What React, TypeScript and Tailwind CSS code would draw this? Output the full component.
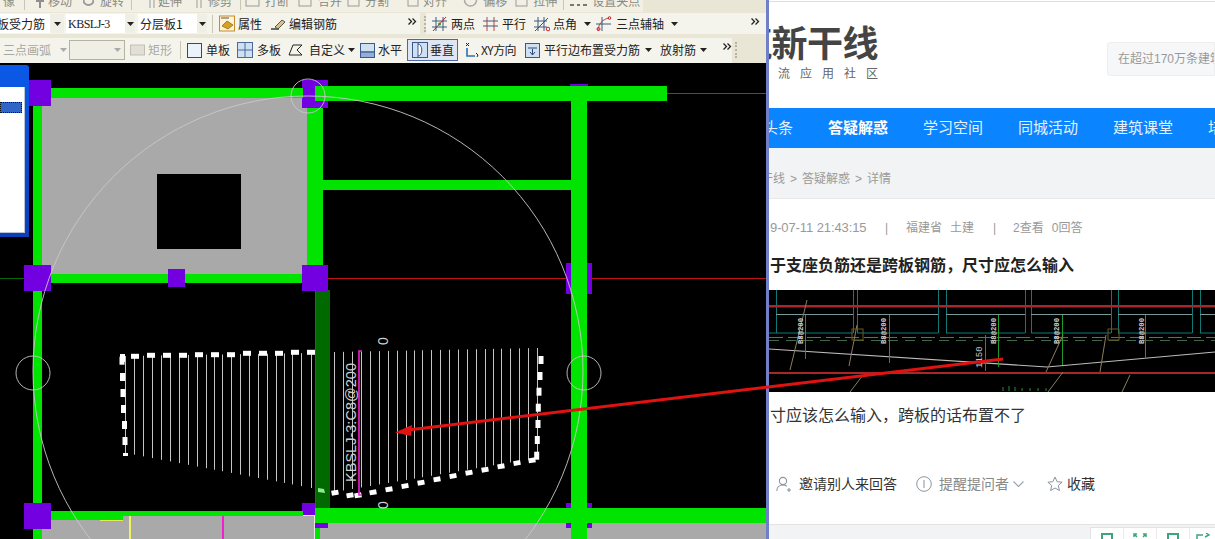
import React from "react";

const T = ({ c, className = "" }: { c: string; className?: string }) => (
  <span className={`shrink-0 whitespace-nowrap ${className}`}>{c}</span>
);

const Caret = ({ className = "" }: { className?: string }) => (
  <svg width="7" height="4" viewBox="0 0 7 4" className={`shrink-0 ${className}`}>
    <path d="M0 0h7L3.5 4z" fill="currentColor" />
  </svg>
);

const Chev = ({ className = "" }: { className?: string }) => (
  <svg width="9" height="7" viewBox="0 0 9 7" className={`shrink-0 self-start mt-[5px] ${className}`} fill="none" stroke="#222" strokeWidth="1.3">
    <path d="M0.5 0.5l3 3-3 3M4.5 0.5l3 3-3 3" />
  </svg>
);

const Sep = ({ className = "" }: { className?: string }) => (
  <span className={`shrink-0 w-px h-[18px] bg-[#c9c6b6] ${className}`} />
);

const Grip = ({ className = "" }: { className?: string }) => (
  <span className={`shrink-0 w-[2px] h-[16px] border-l-2 border-dotted border-[#b5b3a6] ${className}`} />
);

const Ic = ({ w, h = 14, className = "", children }: { w: number; h?: number; className?: string; children: React.ReactNode }) => (
  <svg width={w} height={h} viewBox={`0 0 ${w} ${h}`} fill="none" className={`shrink-0 ${className}`}>
    {children}
  </svg>
);

const Select = ({ text, latin, boxW, btnClass }: { text: string; latin?: boolean; boxW: string; btnClass?: string }) => (
  <div className="flex h-[19px] shrink-0">
    <div className={`bg-white flex items-center overflow-hidden ${boxW} ${latin ? "font-['Liberation_Serif',serif] text-[12px] tracking-[-0.5px] pl-[2px]" : "pl-[2px]"}`}>
      {text}
    </div>
    <div className={`w-[10px] bg-[#f0efe6] flex items-center justify-center ${btnClass ?? ""}`}>
      <Caret className="text-[#222]" />
    </div>
  </div>
);

const H = (x: number) => 352 - ((x - 334) * 4) / 203;
const leftXs = [125, 134, 143, 152, 161, 170, 179, 188, 197, 206, 214, 222, 231, 240, 249, 258, 267, 276, 284, 292, 301, 311];
const rightXs = [334, 343, 352, 361, 370, 379, 388, 397, 406, 414, 422, 431, 440, 449, 458, 467, 476, 485, 493, 501, 510, 519, 528, 537];
const topDash: [number, number][] = [[135, 356.3], [151, 355.3], [167, 355.3], [183, 355.3], [199, 354.7], [215, 354.7], [231, 354.7], [247, 353.3], [263, 353.3], [279, 353.3], [295, 352.3], [311, 352.3]];
const leftDash: [number, number][] = [[122, 360.7], [122.5, 377], [123, 393], [123.5, 409], [124.5, 425], [125, 441]];
const botDash: [number, number][] = [[335, 492.7], [350, 495.3], [358, 495.3], [373, 492.3], [389, 489.3], [405, 486], [421, 482.7], [437, 479.3], [453, 476], [469, 472.7], [485, 469.7], [501, 466.3], [517, 463], [532, 460.3]];
const rightDash: [number, number][] = [[536.7, 455.7], [537.3, 440], [538, 424], [538.3, 407.7], [539, 391.7], [540, 376], [541, 360]];

const Cad = () => (
  <svg viewBox="0 63 766 476" width="766" height="476" className="block">
    <rect x="0" y="63" width="766" height="476" fill="#000" />
    <line x1="667" y1="93.5" x2="766" y2="93.5" stroke="#d01515" />
    <line x1="0" y1="278.5" x2="24" y2="278.5" stroke="#0a6a0a" />
    <line x1="328" y1="278.5" x2="766" y2="278.5" stroke="#c01212" />
    {/* slab */}
    <rect x="42" y="97" width="266" height="178" fill="#a9a9a9" />
    <rect x="157" y="174" width="84" height="75" fill="#000" />
    <rect x="42" y="516" width="273" height="23" fill="#a9a9a9" />
    <rect x="320" y="523" width="446" height="16" fill="#a9a9a9" />
    <rect x="129" y="516" width="2" height="23" fill="#f0f060" />
    <rect x="222" y="516" width="2" height="23" fill="#f020d0" />
    <rect x="100" y="520" width="23" height="1" fill="#e8e860" />
    <line x1="123" y1="515.5" x2="315" y2="515.5" stroke="#e8e8e8" />
    <line x1="314.5" y1="516" x2="314.5" y2="539" stroke="#e8e8e8" />
    {/* purple under */}
    <rect x="302" y="80" width="26" height="28" fill="#7200e0" />
    <rect x="566" y="263" width="26" height="31" fill="#7200e0" />
    <rect x="570" y="84" width="18" height="6" fill="#7200e0" />
    <rect x="566" y="503" width="26" height="25" fill="#7200e0" />
    <rect x="315" y="503" width="13" height="25" fill="#7200e0" />
    <rect x="302" y="503" width="13" height="12" fill="#7200e0" />
    {/* beams */}
    <rect x="315" y="290" width="15" height="218" fill="#006a00" />
    <line x1="315.5" y1="290" x2="315.5" y2="508" stroke="#a03010" />
    <g fill="#00e400">
      <rect x="51" y="88" width="252" height="10" />
      <rect x="315" y="86" width="352" height="15" />
      <rect x="307" y="108" width="16" height="160" />
      <rect x="33" y="106" width="9" height="408" />
      <rect x="51" y="274" width="252" height="9" />
      <rect x="323" y="180" width="248" height="10" />
      <rect x="571" y="91" width="16" height="448" />
      <rect x="51" y="511" width="252" height="5" />
      <rect x="33" y="511" width="90" height="9" />
      <rect x="33" y="520" width="9" height="19" />
      <rect x="315" y="508" width="451" height="15" />
      <rect x="315" y="528" width="5" height="11" />
    </g>
    <rect x="29" y="80" width="22" height="26" fill="#7200e0" />
    <rect x="24" y="265" width="27" height="26" fill="#7200e0" />
    <rect x="302" y="265" width="26" height="26" fill="#7200e0" />
    <rect x="168" y="269" width="17" height="18" fill="#7200e0" />
    <rect x="24" y="503" width="27" height="26" fill="#7200e0" />
    {/* circles */}
    <g fill="none" stroke="#c8c8c8" strokeWidth="0.9">
      <circle cx="308" cy="371" r="275" />
      <circle cx="308" cy="96" r="17" />
      <circle cx="33" cy="373" r="17" />
      <circle cx="584" cy="373" r="17" />
    </g>
    {/* hatch */}
    <g stroke="#c4c4c4" strokeWidth="1">
      {leftXs.map((x) => (
        <line key={x} x1={x + 0.5} y1={356 - ((x - 125) * 3) / 186} x2={x + 0.5} y2={453 + ((x - 125) * 35) / 186} />
      ))}
      {rightXs.map((x) => (
        <line key={x} x1={x + 0.5} y1={H(x)} x2={x + 0.5} y2={492 - ((x - 334) * 34) / 203} />
      ))}
    </g>
    <g fill="#fff">
      {topDash.map(([x, y]) => (
        <rect key={x} x={x - 4} y={y - 2.5} width="8" height="5" />
      ))}
      {leftDash.map(([x, y]) => (
        <rect key={y} x={x - 2.5} y={y - 4} width="5" height="8" />
      ))}
      <rect x="123" y="453" width="5" height="3" />
      <rect x="120" y="354" width="5" height="8" />
      {botDash.map(([x, y]) => (
        <rect key={x} x={x - 3.5} y={y - 2.5} width="7" height="5" transform={`rotate(-10 ${x} ${y})`} />
      ))}
      {rightDash.map(([x, y]) => (
        <rect key={y} x={x - 2.5} y={y - 4} width="5" height="8" />
      ))}
    </g>
    <path d="M318 488l6 1 1 4-7-1z" fill="#90e890" />
    <path d="M362 351h-3v144h3" fill="none" stroke="#f020d0" strokeWidth="1.6" />
    <text x="0" y="0" transform="translate(356 482) rotate(-90)" fill="#cfcfcf" fontFamily="'Liberation Sans',sans-serif" fontSize="14" textLength="119" lengthAdjust="spacingAndGlyphs">KBSLJ-3:C8@200</text>
    <text x="0" y="0" transform="translate(388 345) rotate(-90)" fill="#cfcfcf" fontFamily="'Liberation Sans',sans-serif" fontSize="14">0</text>
    <text x="0" y="0" transform="translate(388 509) rotate(-90)" fill="#cfcfcf" fontFamily="'Liberation Sans',sans-serif" fontSize="14">0</text>
  </svg>
);

const Photo = () => (
  <svg viewBox="769 290 446 102" width="446" height="102" className="block shrink-0">
    <rect x="769" y="290" width="446" height="102" fill="#000" />
    <g stroke="#0f7a78" strokeWidth="1" fill="none">
      {[776, 853, 938, 1025, 1111, 1192].map((x) => (
        <path key={x} d={`M${x}.5 290v43`} />
      ))}
      {[857, 946, 1031, 1118, 1200].map((x) => (
        <path key={x} d={`M${x}.5 290v43`} />
      ))}
      <path d="M769 333H853M857 333H938M946 333H1025M1031 333H1111M1118 333H1192M1200 333H1215" />
    </g>
    <path d="M776 314.5H853M857 314.5H938M946 314.5H1025M1031 314.5H1111M1118 314.5H1192M1200 314.5H1215" stroke="#7a9a9a" fill="none" />
    <path d="M769 337.5H1215" stroke="#4f7a5a" strokeDasharray="14 5" fill="none" />
    <path d="M769 340.5H1215" stroke="#3f6a4a" strokeDasharray="10 7" fill="none" />
    <rect x="769" y="305" width="446" height="2.5" fill="#a8262c" />
    <rect x="769" y="372" width="446" height="2" fill="#a8262c" />
    <path d="M769 349L1047 367L1215 352" stroke="#bcbcbc" strokeWidth="1.1" fill="none" />
    <g stroke="#1f9a2a" fill="none">
      <path d="M805.5 315v44M889.5 315v48M998.5 315v52M1062.5 315v50M1145.5 315v44M985.5 335v36" />
    </g>
    <g stroke="#8a7f60" fill="none">
      <path d="M807 300L790 370M857 325L849 366M1063 335L1046 372M1063 372L1048 392M863 375L850 392M1106 335L1100 372M1130 375L1122 392" />
    </g>
    <g fill="none" stroke="#6a5a1a">
      <rect x="852" y="329" width="11" height="11" />
      <rect x="1108" y="329" width="11" height="11" />
    </g>
    <g fill="#d0d0d0" fontFamily="'Liberation Mono',monospace" fontSize="7" fontWeight="bold">
      {[803, 886, 996, 1059, 1144].map((x) => (
        <text key={x} x="0" y="0" transform={`translate(${x} 344) rotate(-90)`} textLength="26" lengthAdjust="spacingAndGlyphs">B8@200</text>
      ))}
    </g>
    <text x="0" y="0" transform="translate(982 368) rotate(-90)" fill="#c8c8c8" fontFamily="'Liberation Mono',monospace" fontSize="9">1150</text>
    <g stroke="#2a8a3a">
      <path d="M1003 391v-4M1009 391v-5M1015 391v-4M1022 391v-3M1030 391v-3M1038 391v-3M1046 391v-3" />
    </g>
  </svg>
);

export default function App() {
  return (
    <div className="relative flex w-[1215px] h-[539px] overflow-hidden bg-white font-['Liberation_Sans','Noto_Sans_CJK_SC',sans-serif]">
      {/* Left: CAD application */}
      <div className="relative w-[766px] h-[539px] shrink-0 overflow-hidden flex flex-col bg-[#e9e6d6] text-[12px] text-[#222] font-['Noto_Sans_CJK_SC',sans-serif]">
        {/* row 1, cut off at top */}
        <div className="h-[12px] shrink-0 overflow-hidden">
          <div className="w-[643px] h-[12px] bg-[#f2f0e4] flex items-start text-[#8a8a80] leading-[16px]">
            <div className="flex items-center h-[16px] -mt-[7px]">
              <T c="像" className="ml-[3px] w-[12px]" />
              <Sep className="ml-[9px]" />
              <Ic w={10} className="ml-[10px]"><path d="M5 0v14M1 7h8" stroke="#8f8f8f" strokeWidth="2" /></Ic>
              <T c="移动" className="ml-[3px]" />
              <Ic w={11} className="ml-[11px]"><circle cx="5.5" cy="6" r="5" stroke="#9a9a9a" strokeWidth="2" /></Ic>
              <T c="旋转" className="ml-[6px]" />
              <Sep className="ml-[7px]" />
              <Ic w={8} className="ml-[16px]"><path d="M2 0v14M6 0v14" stroke="#999" /></Ic>
              <T c="延伸" className="ml-[2px]" />
              <Ic w={8} className="ml-[13px]"><path d="M2 0v14M6 0v14" stroke="#999" /></Ic>
              <T c="修剪" className="ml-[5px]" />
              <Sep className="ml-[8px]" />
              <Ic w={15} className="ml-[4px]"><rect x="1" y="1" width="13" height="11" stroke="#999" /></Ic>
              <T c="打断" className="ml-[5px]" />
              <Ic w={14} className="ml-[9px]"><rect x="1" y="1" width="12" height="11" stroke="#999" /></Ic>
              <T c="合并" className="ml-[6px]" />
              <Ic w={13} className="ml-[5px]"><rect x="1" y="1" width="11" height="11" stroke="#999" /></Ic>
              <T c="分割" className="ml-[5px]" />
              <Ic w={12} className="ml-[18px]"><rect x="1" y="1" width="10" height="11" stroke="#999" /></Ic>
              <T c="对齐" className="ml-[4px]" />
              <Ic w={15} className="ml-[16px]"><circle cx="7.5" cy="6" r="6" stroke="#aaa" strokeWidth="1.5" /></Ic>
              <T c="偏移" className="ml-[5px]" />
              <Ic w={13} className="ml-[8px]"><rect x="1" y="1" width="11" height="11" stroke="#999" /></Ic>
              <T c="拉伸" className="ml-[5px]" />
              <Sep className="ml-[6px]" />
              <Ic w={17} className="ml-[6px]"><path d="M0 11h4M7 11h3M13 11h4" stroke="#777" strokeWidth="2" /></Ic>
              <T c="设置夹点" className="ml-[5px]" />
            </div>
          </div>
        </div>
        {/* row 2 */}
        <div className="h-[25px] shrink-0 flex items-start pt-[1px]">
          <div className="w-[420px] h-[21px] shrink-0 bg-[#f5f4ec] flex items-center overflow-hidden">
            <div className="-ml-[5px] flex">
              <Select text="板受力筋" boxW="w-[55px]" btnClass="w-[14px]" />
              <div className="w-[2px]" />
              <Select text="KBSLJ-3" latin boxW="w-[59px]" />
              <div className="w-[3px]" />
              <Select text="分层板1" boxW="w-[59px]" />
            </div>
            <Sep className="ml-[5px]" />
            <Ic w={16} h={17} className="ml-[6px]">
              <rect x="0.5" y="1" width="15" height="15" fill="#fff3d8" stroke="#c78a2c" />
              <path d="M3 11l5-5 6 4-5 4z" fill="#d8a020" stroke="#80601a" strokeWidth="0.7" />
              <path d="M2 3h8" stroke="#555" />
            </Ic>
            <T c="属性" className="ml-[3px]" />
            <Ic w={16} className="ml-[8px]">
              <path d="M1 12h8" stroke="#222" strokeWidth="1.3" />
              <path d="M5 10l7-7 3 2-7 7z" fill="#d8c28a" stroke="#333" strokeWidth="0.8" />
            </Ic>
            <T c="编辑钢筋" className="ml-[3px]" />
            <Chev className="ml-[71px]" />
          </div>
          <Grip className="ml-[4px] mt-[3px]" />
          <div className="flex-1 h-[21px] bg-[#f5f4ec] flex items-center overflow-hidden">
            <Ic w={15} h={16} className="ml-[6px]">
              <path d="M4 1v14M11 1v14" stroke="#3a5a80" />
              <path d="M0 5h15M0 11h15" stroke="#3a5a80" />
              <path d="M1 15L14 1" stroke="#c02020" />
              <circle cx="7.5" cy="8" r="1.5" fill="#40902a" />
            </Ic>
            <T c="两点" className="ml-[4px]" />
            <Ic w={15} h={16} className="ml-[8px]">
              <path d="M4 1v14M11 1v14" stroke="#c04040" />
              <path d="M0 5h15M0 10h15" stroke="#3a5a80" />
            </Ic>
            <T c="平行" className="ml-[4px]" />
            <Ic w={16} h={16} className="ml-[8px]">
              <path d="M4 1v14M10 1v14" stroke="#3a5a80" />
              <path d="M0 5h13M0 11h13" stroke="#3a5a80" />
              <path d="M1 15L14 2" stroke="#c02020" />
              <circle cx="14" cy="13" r="1.8" stroke="#d02020" />
            </Ic>
            <T c="点角" className="ml-[3px]" />
            <Caret className="ml-[7px] text-[#222]" />
            <Ic w={16} h={16} className="ml-[5px]">
              <path d="M2 15C2 8 7 3 13 2" stroke="#c04040" />
              <path d="M6 1v14M0 8h15" stroke="#3a5a80" />
              <circle cx="2.5" cy="13" r="1.5" stroke="#c02020" />
              <circle cx="13.5" cy="2" r="1.3" stroke="#c02020" />
            </Ic>
            <T c="三点辅轴" className="ml-[4px]" />
            <Caret className="ml-[7px] text-[#222]" />
            <Chev className="ml-[73px]" />
          </div>
        </div>
        {/* row 3 */}
        <div className="h-[26px] shrink-0 flex items-center">
          <div className="w-[732px] h-[25px] shrink-0 bg-[#f5f4ec] flex items-center overflow-hidden relative">
            <T c="三点画弧" className="ml-[3px] text-[#a8a8a0]" />
            <Caret className="ml-[9px] text-[#aaa]" />
            <div className="ml-[2px] w-[56px] h-[20px] bg-[#f0efe6] border border-[#b5b2a0] shrink-0 flex items-center justify-end pr-[3px]">
              <Caret className="text-[#aaa]" />
            </div>
            <Ic w={15} h={12} className="ml-[5px]"><rect x="0.5" y="1" width="14" height="10" fill="#e2e0d6" stroke="#c0bfb2" /></Ic>
            <T c="矩形" className="ml-[3px] text-[#a8a8a0]" />
            <Sep className="ml-[8px]" />
            <Ic w={15} h={15} className="ml-[6px]"><rect x="0.5" y="0.5" width="14" height="14" fill="#eaf2fb" stroke="#2a4a80" /></Ic>
            <T c="单板" className="ml-[4px]" />
            <Ic w={16} h={16} className="ml-[7px]">
              <rect x="0.5" y="0.5" width="15" height="15" fill="#cfe0f2" stroke="#4a6a9a" />
              <path d="M8 0v16M0 8h16" stroke="#4a6a9a" />
            </Ic>
            <T c="多板" className="ml-[4px]" />
            <Ic w={15} h={14} className="ml-[7px]"><path d="M1 12L5 2h9l-5 5 5 5z" stroke="#222" /></Ic>
            <T c="自定义" className="ml-[6px]" />
            <Caret className="ml-[3px] text-[#222]" />
            <Ic w={15} h={15} className="ml-[5px]">
              <rect x="0.5" y="0.5" width="14" height="14" fill="#cfe0f2" stroke="#3a5a8a" />
              <path d="M1 9h13" stroke="#3a5a8a" strokeWidth="1.5" />
              <path d="M1 10h13v4H1z" fill="#8fb0d8" />
            </Ic>
            <T c="水平" className="ml-[3px]" />
            <div className="ml-[5px] w-[51px] h-[22px] shrink-0 bg-[#dfe6f2] border border-[#4a6a9f] flex items-center">
              <Ic w={16} h={16} className="ml-[4px]">
                <rect x="0.5" y="0.5" width="15" height="15" fill="#cfe0f2" stroke="#3a5a8a" />
                <path d="M6 1v14M6 2c5 0 5 12 0 12" stroke="#3a5a8a" fill="#fff" />
              </Ic>
              <T c="垂直" className="ml-[2px]" />
            </div>
            <Ic w={16} h={16} className="ml-[5px]">
              <path d="M3 1l3 3M6 1L3 4" stroke="#222" />
              <path d="M4 6v8h8" stroke="#3070b0" strokeWidth="1.6" />
              <path d="M13 11l2 2-1 2" stroke="#222" />
            </Ic>
            <T c="XY方向" className="ml-[2px] tracking-[-0.6px]" />
            <Ic w={15} h={15} className="ml-[9px]">
              <rect x="0.5" y="0.5" width="14" height="14" fill="#cfe0f2" stroke="#3a5a8a" />
              <path d="M3 5h9M7.5 6v6M5 9l2.5 3L10 9" stroke="#2a4a7a" />
            </Ic>
            <T c="平行边布置受力筋" className="ml-[4px]" />
            <Caret className="ml-[5px] text-[#222]" />
            <T c="放射筋" className="ml-[8px]" />
            <Caret className="ml-[4px] text-[#222]" />
            <Chev className="ml-[16px]" />
          </div>
          <Grip className="ml-[3px]" />
        </div>
        <Cad />
        {/* Dialog over the canvas */}
        <div className="absolute left-0 top-[65px] w-[29px] h-[172px] rounded-tr-[3px] bg-linear-to-b from-[#0a5ae8] to-[#0a3fb8]">
          <div className="mt-[22px] w-[25px] h-[146px] bg-white border-r border-b border-[#b8c4d8] pt-[15px]">
            <div className="w-[22px] h-[11px] bg-[#3165c5] border border-dotted border-[#111]" />
          </div>
        </div>
      </div>

      {/* divider */}
      <div className="w-[3px] shrink-0 bg-[#6f80c8]" />

      {/* Right: web page */}
      <div className="flex-1 min-w-0 overflow-hidden flex flex-col">
        <div className="h-[2px] shrink-0 border-t border-[#dedede] mt-px" />
        <div className="h-[105px] shrink-0 relative flex">
          <div className="w-[338px] shrink-0">
            <div className="-ml-[33px] mt-[18px] text-[36px] leading-[40px] font-bold text-[#444] whitespace-nowrap tracking-[-0.5px] font-['Noto_Sans_CJK_SC',sans-serif]">筑新干线</div>
            <div className="ml-[9px] mt-[5px] text-[12px] leading-[16px] text-[#666] tracking-[10px] whitespace-nowrap">流应用社区</div>
          </div>
          <div className="mt-[39px] h-[34px] flex-1 bg-[#f6f7f8] border border-[#eeeeee] rounded-l-[3px] pl-[10px] text-[12px] leading-[32px] text-[#999] whitespace-nowrap overflow-hidden">在超过170万条建筑</div>
        </div>
        <nav className="h-[40px] shrink-0 bg-[#0a84ff] flex items-center text-[15px] text-[#e4f1ff] whitespace-nowrap overflow-hidden">
          <span className="w-[65px] shrink-0 -ml-[6px]">头条</span>
          <span className="w-[95px] shrink-0 font-bold text-white">答疑解惑</span>
          <span className="w-[95px] shrink-0">学习空间</span>
          <span className="w-[95px] shrink-0">同城活动</span>
          <span className="w-[95px] shrink-0">建筑课堂</span>
          <span className="shrink-0">培训</span>
        </nav>
        <div className="h-[51px] shrink-0 bg-[#f1f3f4] border-b border-[#e8e8e8] flex items-center text-[12px] text-[#999] whitespace-nowrap pt-[12px]">
          <span className="-ml-[8px]">干线</span>
          <span className="ml-[5px]">&gt;</span>
          <span className="ml-[5px]">答疑解惑</span>
          <span className="ml-[5px]">&gt;</span>
          <span className="ml-[5px]">详情</span>
        </div>
        <div className="h-[20px] mt-[19px] shrink-0 flex items-center text-[12px] text-[#999] whitespace-nowrap pl-px">
          <span className="text-[13px] tracking-[-0.1px] w-[115px]">9-07-11 21:43:15</span>
          <span className="w-[21px]">|</span>
          <span>福建省</span>
          <span className="ml-[8px]">土建</span>
          <span className="ml-[19px] w-[20px]">|</span>
          <span>2查看</span>
          <span className="ml-[8px]">0回答</span>
        </div>
        <h1 className="mt-[18px] h-[20px] shrink-0 text-[16px] leading-[20px] font-bold text-[#222] whitespace-nowrap pl-px">于支座负筋还是跨板钢筋，尺寸应怎么输入</h1>
        <div className="mt-[14px] shrink-0"><Photo /></div>
        <p className="mt-[14px] h-[20px] shrink-0 text-[16px] leading-[20px] text-[#333] whitespace-nowrap pl-px">寸应该怎么输入，跨板的话布置不了</p>
        <div className="mt-[48px] h-[20px] shrink-0 flex items-center text-[14px] whitespace-nowrap pl-[7px]">
          <svg width="16" height="17" viewBox="0 0 16 17" fill="none" stroke="#8a93a0" strokeWidth="1.1" className="shrink-0">
            <circle cx="7" cy="5" r="3.6" />
            <path d="M0.8 15c0-4 3-6 6.2-6 1.5 0 2.8.4 3.8 1.2M11 14h4M13 12v4" />
          </svg>
          <span className="ml-[7px] text-[#333]">邀请别人来回答</span>
          <svg width="16" height="16" viewBox="0 0 16 16" fill="none" stroke="#8a93a0" strokeWidth="1" className="ml-[19px] shrink-0">
            <circle cx="8" cy="8" r="7.3" />
            <path d="M8 4v8" />
          </svg>
          <span className="ml-[7px] text-[#888]">提醒提问者</span>
          <svg width="11" height="7" viewBox="0 0 11 7" fill="none" stroke="#9aa2ad" strokeWidth="1.1" className="ml-[4px] shrink-0">
            <path d="M0.5 0.5l5 5 5-5" />
          </svg>
          <svg width="16" height="16" viewBox="0 0 16 16" fill="none" stroke="#8a93a0" strokeWidth="1" className="ml-[23px] shrink-0">
            <path d="M8 1l2.1 4.7 5 .5-3.8 3.3 1.1 5L8 12l-4.4 2.5 1.1-5L.9 6.2l5-.5z" />
          </svg>
          <span className="ml-[4px] text-[#333]">收藏</span>
        </div>
        <div className="mt-[30px] flex-1 bg-[#f1f3f4] border-t border-[#e3e3e3] flex justify-end items-start overflow-hidden pt-[2px]">
          <div className="w-[125px] h-[13px] bg-white border-l border-t border-[#e3e3e3] flex">
            <div className="w-[33px] shrink-0 border-r border-[#f0e8e8] flex justify-center pt-[5px]">
              <span className="block w-[12px] h-[12px] border-2 border-[#3aa77a]" />
            </div>
            <div className="w-[33px] shrink-0 border-r border-[#f0e8e8] flex justify-center pt-[5px]">
              <svg width="14" height="12" viewBox="0 0 14 12" fill="none" stroke="#3aa77a" strokeWidth="1.5" className="shrink-0"><path d="M1 4V1h3M10 1h3v3M4 4L1 1M10 4l3-3" /></svg>
            </div>
            <div className="w-[33px] shrink-0 border-r border-[#f0e8e8] flex justify-center pt-[5px]">
              <span className="block w-[12px] h-[12px] border-2 border-[#3aa77a]" />
            </div>
            <div className="w-[26px] shrink-0 flex justify-center pt-[5px]">
              <svg width="14" height="12" viewBox="0 0 14 12" fill="none" stroke="#3aa77a" strokeWidth="1.5" className="shrink-0"><path d="M1 12V2h6M9 4l4-2-3-2" /></svg>
            </div>
          </div>
        </div>
      </div>

      {/* Annotation arrow drawn over both windows */}
      <svg viewBox="0 0 1215 539" width="1215" height="539" className="absolute left-0 top-0 pointer-events-none">
        <path d="M1003 359L408 430" stroke="#e01212" strokeWidth="3" fill="none" />
        <path d="M395 432.5L412 425L411 436z" fill="#e01212" />
      </svg>
    </div>
  );
}
